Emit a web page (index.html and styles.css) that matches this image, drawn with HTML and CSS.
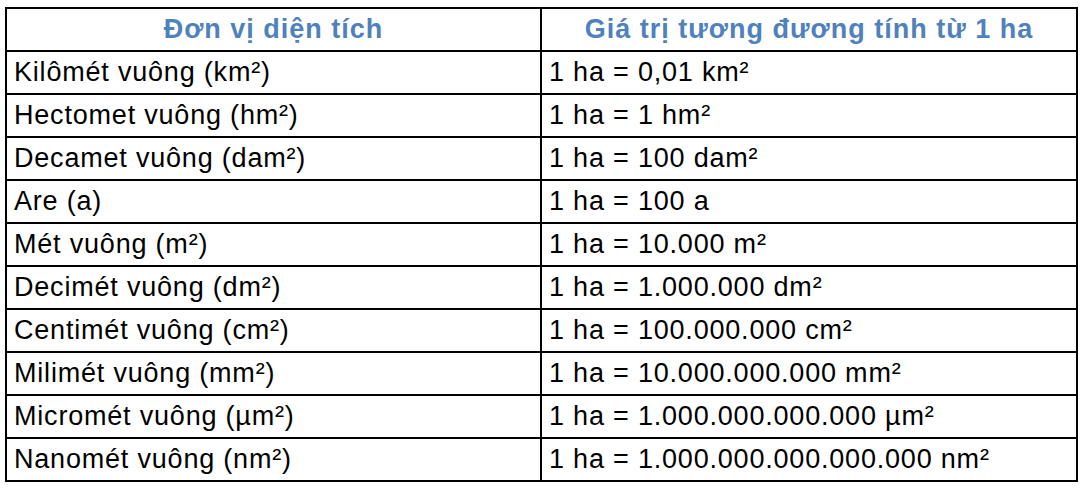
FILE: index.html
```html
<!DOCTYPE html>
<html lang="vi">
<head>
<meta charset="utf-8">
<link rel="stylesheet" href="styles.css">
</head>
<body>
<table class="units">
  <colgroup><col class="c1"><col class="c2"></colgroup>
  <thead>
    <tr><th>Đơn vị diện tích</th><th>Giá trị tương đương tính từ 1 ha</th></tr>
  </thead>
  <tbody>
    <tr><td>Kilômét vuông (km²)</td><td>1 ha = 0,01 km²</td></tr>
    <tr><td>Hectomet vuông (hm²)</td><td>1 ha = 1 hm²</td></tr>
    <tr><td>Decamet vuông (dam²)</td><td>1 ha = 100 dam²</td></tr>
    <tr><td>Are (a)</td><td>1 ha = 100 a</td></tr>
    <tr><td>Mét vuông (m²)</td><td>1 ha = 10.000 m²</td></tr>
    <tr><td>Decimét vuông (dm²)</td><td>1 ha = 1.000.000 dm²</td></tr>
    <tr><td>Centimét vuông (cm²)</td><td>1 ha = 100.000.000 cm²</td></tr>
    <tr><td>Milimét vuông (mm²)</td><td>1 ha = 10.000.000.000 mm²</td></tr>
    <tr><td>Micromét vuông (µm²)</td><td>1 ha = 1.000.000.000.000 µm²</td></tr>
    <tr><td>Nanomét vuông (nm²)</td><td>1 ha = 1.000.000.000.000.000 nm²</td></tr>
  </tbody>
</table>
</body>
</html>
```
FILE: styles.css
```css
html, body {
  margin: 0;
  padding: 0;
  background: #ffffff;
}
body {
  padding: 7px 0 0 5px;
  font-family: "Liberation Sans", Arial, sans-serif;
  color: #000000;
}
.units {
  border-collapse: collapse;
  table-layout: fixed;
  width: 1071px;
  font-size: 27px;
  letter-spacing: 0.8px;
}
.c1 { width: 535px; }
.c2 { width: 536px; }
.units th, .units td {
  border: 2px solid #000000;
  height: 41px;
  padding: 0 0 0 7px;
  box-sizing: border-box;
  vertical-align: middle;
  white-space: nowrap;
  line-height: 41px;
}
.units tr { height: 43px; }
.units th {
  color: #4f81bd;
  font-weight: bold;
  text-align: center;
  padding: 0;
  letter-spacing: 1px;
}
.units td { text-align: left; }
```
